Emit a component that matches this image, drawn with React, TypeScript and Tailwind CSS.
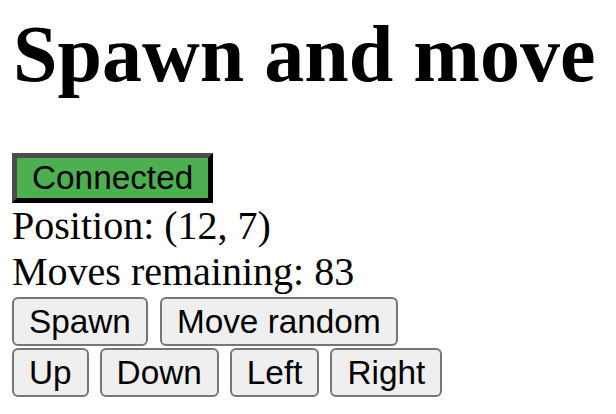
export default function App() {
  const btn =
    "h-[49px] flex items-center px-[15px] border-[2px] border-[#767676] rounded-[6px] bg-[#efefef] text-black text-[33.33px] leading-none [font-family:'Liberation_Sans',Arial,sans-serif]";
  return (
    <div className="bg-white w-[616px] h-[414px] overflow-hidden pl-[12px] text-black [font-family:'Liberation_Serif','Times_New_Roman',serif]">
      <h1 className="mt-[14px] text-[80px] font-bold leading-[80px] ml-[1px] whitespace-nowrap">Spawn and move</h1>
      <div className="mt-[59px] h-[50px] flex">
        <button className="h-[50px] flex items-center px-[15px] border-[5px] border-t-[#4d4d4d] border-l-[#4d4d4d] border-r-black border-b-black bg-[#4caf50] text-black text-[33.33px] leading-none [font-family:'Liberation_Sans',Arial,sans-serif]">
          Connected
        </button>
      </div>
      <div className="text-[40px] leading-[46px]">Position: (12, 7)</div>
      <div className="text-[40px] leading-[46px]">Moves remaining: 83</div>
      <div className="mt-[2px] flex flex-col gap-[2px]">
        <div className="flex gap-[12px]">
          <button className={btn}>Spawn</button>
          <button className={btn}>Move random</button>
        </div>
        <div className="flex gap-[11px]">
          <button className={btn}>Up</button>
          <button className={btn}>Down</button>
          <button className={btn}>Left</button>
          <button className={btn}>Right</button>
        </div>
      </div>
    </div>
  );
}
